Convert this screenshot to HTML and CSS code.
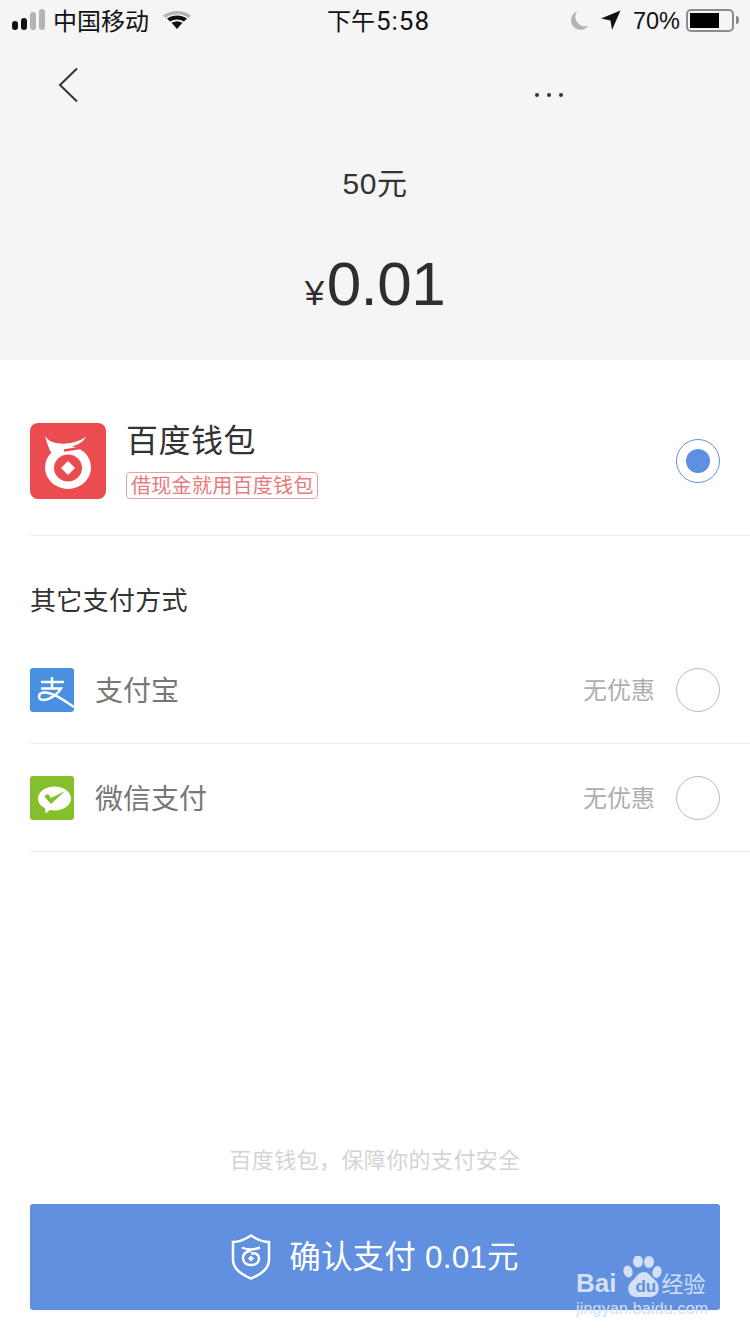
FILE: index.html
```html
<!DOCTYPE html>
<html lang="zh-CN">
<head>
<meta charset="UTF-8">
<meta name="viewport" content="width=device-width, initial-scale=1.0">
<title>支付</title>
<link rel="stylesheet" href="styles.css">
</head>
<body>

<div class="page">
    <header class="top">
        <div class="status-bar">
            <div class="status-left">
                <span class="signal"><i class="on s1"></i><i class="on s2"></i><i class="s3"></i><i class="s4"></i></span>
                <span class="carrier">中国移动</span>
                <svg class="wifi" width="30" height="22" viewBox="0 0 30 22">
                    <path d="M1 6.500C9 .5 21 .5 29 6.500L26.500 9C19.500 4 10.500 4 3.500 9Z" fill="#b4b4b4"/>
                    <path d="M5 9.500C11 5.500 19 5.500 25 9.500L22 12.500C17.500 9.800 12.500 9.800 8 12.500Z" fill="#111"/>
                    <path d="M9.500 13.800C13 11.800 17 11.800 20.500 13.800L15 20Z" fill="#111"/>
                </svg>
            </div>
            <div class="clock">下午<span class="clock-time">5:58</span></div>
            <div class="status-right">
                <svg class="moon" width="19" height="19" viewBox="0 0 19 19">
                    <path d="M7 .5A9.500 9.500 0 1 0 18.500 14.500A9.500 9.500 0 0 1 7 .5Z" fill="#b4b4b4"/>
                </svg>
                <svg class="arrow" width="20" height="20" viewBox="0 0 20 20">
                    <path d="M19.500 .5L11 20L9.500 10.500L0 8.500Z" fill="#111"/>
                </svg>
                <span class="battery-pct">70%</span>
                <span class="battery"><i class="battery-fill"></i></span>
                <i class="battery-tip"></i>
            </div>
        </div>
        <nav class="nav">
            <svg class="back" width="22" height="36" viewBox="0 0 22 36">
                <path d="M19 1.500L2 18L19 34.500" fill="none" stroke="#333" stroke-width="2"/>
            </svg>
            <span class="more"><i></i><i></i><i></i></span>
        </nav>
        <div class="product">50元</div>
        <div class="amount"><span class="yen">¥</span>0.01</div>
    </header>

    <section class="wallet">
        <svg class="wallet-logo" width="76" height="76" viewBox="0 0 76 76">
            <rect width="76" height="76" rx="8" fill="#ea4c50"/>
            <ellipse cx="38" cy="44.500" rx="23" ry="21.500" fill="#fff"/>
            <ellipse cx="38" cy="45" rx="14" ry="13.500" fill="#ea4c50"/>
            <path d="M34 27.500L50 25" fill="none" stroke="#ea4c50" stroke-width="2.500"/>
            <path d="M15 13C18 17 21 19 26 20C36 22 46 20 56 14C53 19 48 22 42 23.500C34 25 28 26 24 31L20 28C18 22 16 18 15 13Z" fill="#fff"/>
            <path d="M38 38L45 45L38 52L31 45Z" fill="#fff"/>
        </svg>
        <div class="wallet-text">
            <div class="wallet-name">百度钱包</div>
            <div class="wallet-tag">借现金就用百度钱包</div>
        </div>
        <span class="radio checked"></span>
    </section>

    <h2 class="other-title">其它支付方式</h2>

    <div class="pay-row">
        <svg class="pay-icon" width="44" height="44" viewBox="0 0 44 44">
            <rect width="44" height="44" rx="3" fill="#4a90e2"/>
            <path d="M11 14H34M22 9V20M11 20.500H31C28 26 20 32 13 32C7.500 32 7.500 25 14 24.500C22 24 32 31 44 39" fill="none" stroke="#fff" stroke-width="2.500"/>
        </svg>
        <span class="pay-name">支付宝</span>
        <span class="pay-note">无优惠</span>
        <span class="radio"></span>
    </div>

    <div class="pay-row">
        <svg class="pay-icon" width="44" height="44" viewBox="0 0 44 44">
            <rect width="44" height="44" rx="3" fill="#84bf2c"/>
            <path d="M24.500 10.500C33.500 10.500 41 15.800 41 22.500C41 29.200 33.500 34.500 24.500 34.500C23 34.500 21.500 34.300 20 34L15.500 37.500L15 32C10.500 30 8 26.500 8 22.500C8 15.800 15.500 10.500 24.500 10.500Z" fill="#fff"/>
            <path d="M14 20L18 18L21 22L35 15L21 28Z" fill="#84bf2c"/>
        </svg>
        <span class="pay-name">微信支付</span>
        <span class="pay-note">无优惠</span>
        <span class="radio"></span>
    </div>

    <footer class="bottom">
        <p class="safe-note">百度钱包，保障你的支付安全</p>
        <button class="confirm">
            <svg width="40" height="46" viewBox="0 0 40 46">
                <path d="M20 1.500C26 5.500 32 8 38 8V26C38 34 31 40 20 44.500C9 40 2 34 2 26V8C8 8 14 5.500 20 1.500Z" fill="none" stroke="#fff" stroke-width="2.500"/>
                <path d="M11 13.500C17 16.500 24 15.500 29 13.500M20 16.500C15 17.500 12 20 12 24C12 28.500 15.500 31 20 31C24.500 31 28 28.500 28 24.500C28 20.500 24 18.500 20 19.500" fill="none" stroke="#fff" stroke-width="2.500"/>
                <path d="M20 21.500L23 24.500L20 27.500L17 24.500Z" fill="#fff"/>
            </svg>
            <span class="confirm-text">确认支付 0.01元</span>
        </button>
    </footer>

    <!-- watermark sits over the button -->
    <div class="watermark">
        <div class="wm-line">
            <span class="wm-bai">Bai</span>
            <span class="wm-paw">
                <svg width="39" height="42" viewBox="0 0 39 42">
                    <ellipse cx="5" cy="15.500" rx="4.500" ry="6" transform="rotate(-15 5 15.500)"/>
                    <ellipse cx="15" cy="5.500" rx="5" ry="6"/>
                    <ellipse cx="26" cy="6" rx="5" ry="6"/>
                    <ellipse cx="34" cy="16" rx="4.500" ry="6" transform="rotate(15 34 16)"/>
                    <path d="M21 16C26 16 28 21 32 24C38 29 37 41 27 41H14C4 41 3 30 9 25C13 22 15 16 21 16Z"/>
                </svg>
                <span class="wm-du">du</span>
            </span>
            <span class="wm-cn">经验</span>
        </div>
        <div class="wm-url">jingyan.baidu.com</div>
    </div>
</div>

</body>
</html>
```

FILE: styles.css
```css
* {
    box-sizing: border-box;
}
body {
    margin: 0;
    font-family: "Noto Sans CJK SC", "Liberation Sans", sans-serif;
    background-color: #fff;
}
.page {
    position: relative;
    width: 750px;
    height: 1334px;
    display: flex;
    flex-direction: column;
    overflow: hidden;
}

/* grey top part */
.top {
    height: 360px;
    background-color: #f5f5f5;
    display: flex;
    flex-direction: column;
}
.status-bar {
    height: 40px;
    display: grid;
    grid-template-columns: 1fr auto 1fr;
    align-items: center;
    padding: 0 11px 0 12px;
    color: #111;
}
.status-left,
.status-right {
    display: flex;
    align-items: center;
}
.status-right {
    justify-content: flex-end;
}
.signal {
    display: flex;
    align-items: flex-end;
    gap: 3px;
    height: 22px;
    width: 34px;
}
.signal i {
    display: block;
    width: 6px;
    margin-bottom: 1px;
    border-radius: 3px;
    background-color: #b4b4b4;
}
.signal .on {
    background-color: #111;
}
.s1 { height: 9px; }
.s2 { height: 12px; }
.s3 { height: 18px; }
.s4 { height: 21px; }
.carrier {
    font-size: 24px;
    line-height: 30px;
    margin-left: 7px;
}
.wifi {
    margin-left: 13px;
}
.clock {
    font-size: 24px;
    line-height: 30px;
    margin-left: 6px;
}
.clock-time {
    font-family: Roboto, "Liberation Sans", sans-serif;
    font-size: 26px;
    letter-spacing: 1px;
    margin-left: 1px;
}
.moon {
    margin-right: 12px;
}
.arrow {
    margin-right: 12px;
}
.battery-pct {
    font-family: "Liberation Sans", sans-serif;
    font-size: 23.500px;
    margin: 2px 6px 0 0;
}
.battery {
    display: block;
    width: 48px;
    height: 23px;
    border: 2px solid #8c8c8c;
    border-radius: 5px;
    padding: 2px;
}
.battery-fill {
    display: block;
    width: 29px;
    height: 15px;
    background-color: #000;
}
.battery-tip {
    display: block;
    width: 3px;
    height: 8px;
    margin-left: 2px;
    background-color: #8c8c8c;
    border-radius: 0 3px 3px 0;
}
.nav {
    height: 72px;
    display: flex;
    justify-content: space-between;
    align-items: flex-start;
    padding: 27px 187px 0 58px;
}
.back {
    display: block;
}
.more {
    display: flex;
    gap: 8px;
    margin-top: 26px;
}
.more i {
    display: block;
    width: 4px;
    height: 4px;
    border-radius: 50%;
    background-color: #333;
}
.product {
    margin-top: 50px;
    text-align: center;
    font-family: "Liberation Sans", "Noto Sans CJK SC", sans-serif;
    font-size: 30px;
    letter-spacing: 0.5px;
    line-height: 44px;
    color: #333;
}
.amount {
    margin-top: 42px;
    text-align: center;
    font-family: "Liberation Sans", sans-serif;
    font-size: 62px;
    letter-spacing: -0.5px;
    line-height: 72px;
    color: #2e2e2e;
}
.yen {
    font-size: 35px;
    margin-right: 3px;
}

/* baidu wallet row */
.wallet {
    height: 176px;
    margin-left: 30px;
    padding: 63px 30px 36px 0;
    border-bottom: 1px solid #ececec;
    display: flex;
    align-items: center;
}
.wallet-logo {
    display: block;
}
.wallet-text {
    margin: 0 0 5px 20px;
    flex: 1;
}
.wallet-name {
    font-size: 32px;
    letter-spacing: 0.5px;
    line-height: 40px;
    color: #333;
}
.wallet-tag {
    display: block;
    margin-top: 14px;
    padding: 0 4px 2px;
    width: 192px;
    white-space: nowrap;
    font-size: 20px;
    letter-spacing: 0.3px;
    line-height: 23px;
    color: #e87a7c;
    border: 1px solid #e8a0a2;
    border-radius: 4px;
}

/* radios */
.radio {
    display: block;
    width: 44px;
    height: 44px;
    border: 1px solid #bbb;
    border-radius: 50%;
}
.radio.checked {
    border-color: #6a8fd0;
    padding: 9px;
}
.radio.checked::before {
    content: "";
    display: block;
    width: 24px;
    height: 24px;
    border-radius: 50%;
    background-color: #5f8fe0;
}

/* other methods */
.other-title {
    margin: 0;
    padding: 45px 30px 19px;
    font-size: 26px;
    font-weight: normal;
    letter-spacing: 0.3px;
    line-height: 36px;
    color: #333;
}
.pay-row {
    height: 108px;
    margin-left: 30px;
    padding-right: 30px;
    border-bottom: 1px solid #ececec;
    display: flex;
    align-items: center;
}
.pay-icon {
    display: block;
}
.pay-name {
    margin: 0 0 2px 21px;
    flex: 1;
    font-size: 28px;
    color: #777;
}
.pay-note {
    margin: 0 21px 2px 0;
    font-size: 24px;
    color: #aeaeae;
}

/* bottom */
.bottom {
    margin-top: auto;
    padding: 0 30px 24px;
}
.safe-note {
    margin: 0 0 30px;
    text-align: center;
    font-size: 22px;
    letter-spacing: 0.4px;
    line-height: 32px;
    color: #d4d4d4;
}
.confirm {
    width: 100%;
    height: 106px;
    border: none;
    border-radius: 3px;
    background-color: #6190e0;
    color: #fff;
    font-family: "Liberation Sans", "Noto Sans CJK SC", sans-serif;
    font-size: 31.500px;
    letter-spacing: 0.2px;
    display: flex;
    align-items: center;
    justify-content: center;
    gap: 18px;
}
.confirm svg {
    display: block;
}
.confirm-text {
    line-height: 40px;
}

/* watermark */
.watermark {
    position: absolute;
    left: 576px;
    top: 1256px;
    color: #d3e0f6;
}
.wm-line {
    display: flex;
    align-items: flex-end;
    height: 43px;
}
.wm-bai {
    font-family: "Liberation Sans", sans-serif;
    font-weight: bold;
    font-size: 26px;
    line-height: 30px;
    margin-bottom: 1px;
}
.wm-paw {
    position: relative;
    width: 38px;
    height: 42px;
    margin: 0 0 1px 7px;
    fill: #d3e0f6;
}
.wm-paw svg {
    display: block;
}
.wm-du {
    position: absolute;
    left: 12px;
    top: 22px;
    font-family: "Liberation Sans", sans-serif;
    font-weight: bold;
    font-size: 17px;
    line-height: 18px;
    color: #6190e0;
}
.wm-cn {
    font-size: 22px;
    line-height: 30px;
    margin-bottom: 2px;
}
.wm-url {
    font-family: "Liberation Sans", sans-serif;
    font-size: 16px;
    line-height: 20px;
    letter-spacing: 0.2px;
    color: #d3e0f6;
}
```
